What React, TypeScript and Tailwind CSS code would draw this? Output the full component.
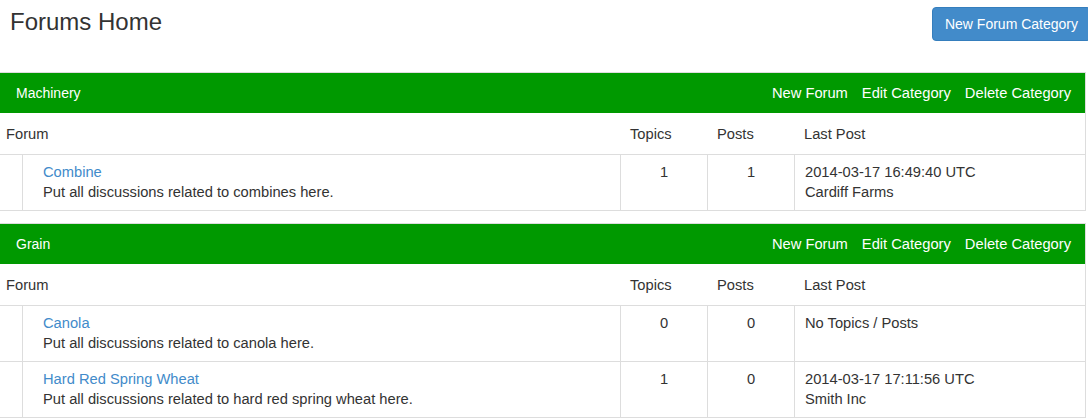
import React from 'react';

type Forum = {
  name: string;
  description: string;
  topics: number;
  posts: number;
  lastPost: string[];
};

type Category = {
  title: string;
  forums: Forum[];
};

const CATEGORIES: Category[] = [
  {
    title: 'Machinery',
    forums: [
      {
        name: 'Combine',
        description: 'Put all discussions related to combines here.',
        topics: 1,
        posts: 1,
        lastPost: ['2014-03-17 16:49:40 UTC', 'Cardiff Farms'],
      },
    ],
  },
  {
    title: 'Grain',
    forums: [
      {
        name: 'Canola',
        description: 'Put all discussions related to canola here.',
        topics: 0,
        posts: 0,
        lastPost: ['No Topics / Posts'],
      },
      {
        name: 'Hard Red Spring Wheat',
        description: 'Put all discussions related to hard red spring wheat here.',
        topics: 1,
        posts: 0,
        lastPost: ['2014-03-17 17:11:56 UTC', 'Smith Inc'],
      },
    ],
  },
];

const cols = 'grid grid-cols-[23px_598px_87px_87px_1fr]';

const CategoryPanel: React.FC<{ category: Category }> = ({ category }) => (
  <div className="border-t border-r border-b border-[#dddddd] mb-[12px]">
    <div className="h-[40px] bg-[#009900] text-white flex items-center justify-between pl-[16px] pr-[14px]">
      <span className="text-[14px]">{category.title}</span>
      <div className="flex gap-[14px]">
        <a href="#">New Forum</a>
        <a href="#">Edit Category</a>
        <a href="#">Delete Category</a>
      </div>
    </div>

    <div className={`${cols} h-[42px] items-center border-b border-[#dddddd]`}>
      <div className="col-span-2 pl-[6px]">Forum</div>
      <div className="pl-[9px]">Topics</div>
      <div className="pl-[9px]">Posts</div>
      <div className="pl-[9px]">Last Post</div>
    </div>

    {category.forums.map((forum, i) => (
      <div
        key={forum.name}
        className={`${cols} ${i < category.forums.length - 1 ? 'border-b border-[#dddddd]' : ''}`}
      >
        <div className="border-r border-[#dddddd]" />
        <div className="border-r border-[#dddddd] pl-[20px] pt-[7px] pb-2">
          <a href="#" className="block text-[#428bca]">{forum.name}</a>
          <div>{forum.description}</div>
        </div>
        <div className="border-r border-[#dddddd] text-center pt-[7px]">{forum.topics}</div>
        <div className="border-r border-[#dddddd] text-center pt-[7px]">{forum.posts}</div>
        <div className="pl-[10px] pt-[7px] pb-2">
          {forum.lastPost.map((line) => (
            <div key={line}>{line}</div>
          ))}
        </div>
      </div>
    ))}
  </div>
);

export default function App() {
  return (
    <div className="w-[1088px] overflow-hidden bg-white">
      <div className="w-[1086px] text-[#333333] text-[14.7px] leading-[20px] font-['Liberation_Sans',Arial,sans-serif]">
        <div className="h-[72px] flex justify-between items-start">
          <h1 className="mt-[9px] ml-[10px] text-[24px] leading-[26px]">Forums Home</h1>
          <button className="mt-[7px] mr-[-5px] shrink-0 h-[34px] px-[12px] rounded-[4px] bg-[#428bca] border border-[#357ebd] text-white text-[14px]">
            New Forum Category
          </button>
        </div>
        {CATEGORIES.map((c) => (
          <CategoryPanel key={c.title} category={c} />
        ))}
      </div>
    </div>
  );
}
